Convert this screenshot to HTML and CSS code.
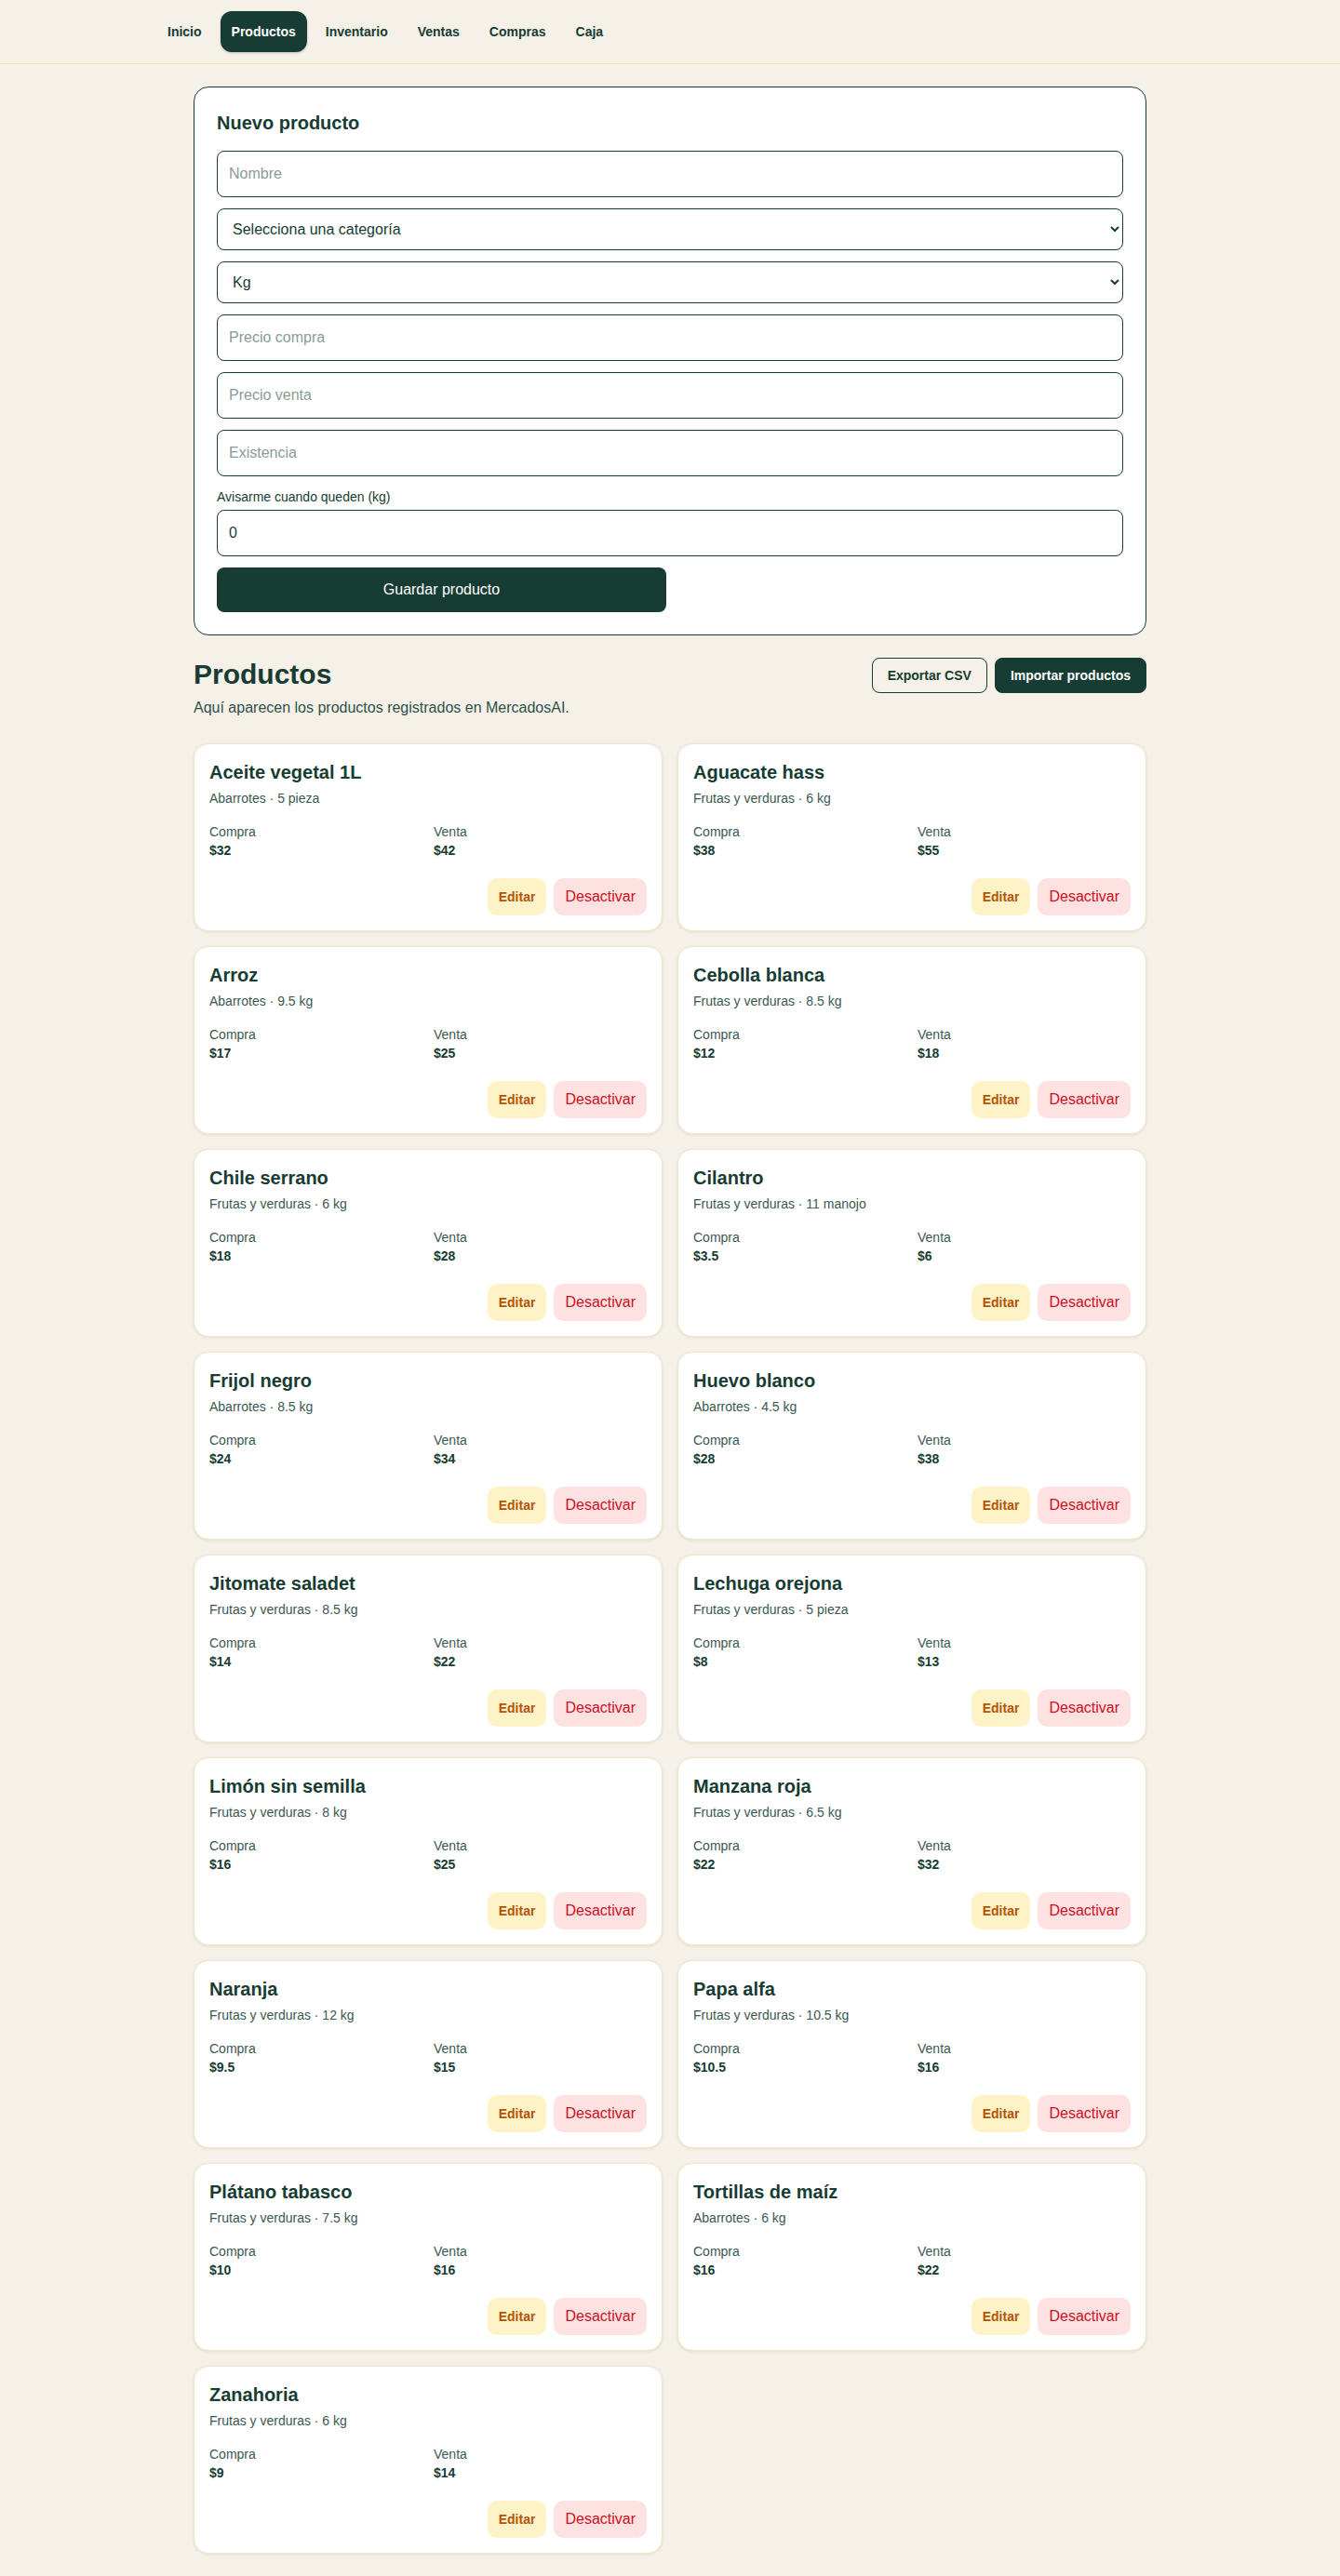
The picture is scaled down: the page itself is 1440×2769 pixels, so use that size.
FILE: index.html
```html
<!DOCTYPE html>
<html lang="es">

<head>
    <meta charset="UTF-8">
    <meta name="viewport" content="width=device-width, initial-scale=1.0">
    <title>MercadosAI - Productos</title>
    <link rel="stylesheet" href="styles.css">
</head>

<body>
    <header class="topbar">
        <nav class="nav">
            <a href="#">Inicio</a>
            <a href="#" class="active">Productos</a>
            <a href="#">Inventario</a>
            <a href="#">Ventas</a>
            <a href="#">Compras</a>
            <a href="#">Caja</a>
        </nav>
    </header>

    <main class="page">
        <section class="form-card">
            <h2>Nuevo producto</h2>
            <form class="product-form">
                <input type="text" placeholder="Nombre">
                <select>
                    <option>Selecciona una categoría</option>
                    <option>Abarrotes</option>
                    <option>Frutas y verduras</option>
                </select>
                <select>
                    <option>Kg</option>
                    <option>Pieza</option>
                    <option>Manojo</option>
                </select>
                <input type="text" placeholder="Precio compra">
                <input type="text" placeholder="Precio venta">
                <input type="text" placeholder="Existencia">
                <div class="field">
                    <label>Avisarme cuando queden (kg)</label>
                    <input type="text" value="0">
                </div>
                <button type="button" class="save-btn">Guardar producto</button>
            </form>
        </section>

        <section class="list-head">
            <div>
                <h1>Productos</h1>
                <p>Aquí aparecen los productos registrados en MercadosAI.</p>
            </div>
            <div class="head-actions">
                <button class="btn-outline">Exportar CSV</button>
                <button class="btn-dark">Importar productos</button>
            </div>
        </section>

        <section class="product-grid">
            <div class="product">
                <h3>Aceite vegetal 1L</h3>
                <div class="meta">Abarrotes · 5 pieza</div>
                <div class="prices">
                    <div><span class="label">Compra</span><span class="value">$32</span></div>
                    <div><span class="label">Venta</span><span class="value">$42</span></div>
                </div>
                <div class="actions"><button class="btn-edit">Editar</button><button class="btn-off">Desactivar</button></div>
            </div>
            <div class="product">
                <h3>Aguacate hass</h3>
                <div class="meta">Frutas y verduras · 6 kg</div>
                <div class="prices">
                    <div><span class="label">Compra</span><span class="value">$38</span></div>
                    <div><span class="label">Venta</span><span class="value">$55</span></div>
                </div>
                <div class="actions"><button class="btn-edit">Editar</button><button class="btn-off">Desactivar</button></div>
            </div>
            <div class="product">
                <h3>Arroz</h3>
                <div class="meta">Abarrotes · 9.5 kg</div>
                <div class="prices">
                    <div><span class="label">Compra</span><span class="value">$17</span></div>
                    <div><span class="label">Venta</span><span class="value">$25</span></div>
                </div>
                <div class="actions"><button class="btn-edit">Editar</button><button class="btn-off">Desactivar</button></div>
            </div>
            <div class="product">
                <h3>Cebolla blanca</h3>
                <div class="meta">Frutas y verduras · 8.5 kg</div>
                <div class="prices">
                    <div><span class="label">Compra</span><span class="value">$12</span></div>
                    <div><span class="label">Venta</span><span class="value">$18</span></div>
                </div>
                <div class="actions"><button class="btn-edit">Editar</button><button class="btn-off">Desactivar</button></div>
            </div>
            <div class="product">
                <h3>Chile serrano</h3>
                <div class="meta">Frutas y verduras · 6 kg</div>
                <div class="prices">
                    <div><span class="label">Compra</span><span class="value">$18</span></div>
                    <div><span class="label">Venta</span><span class="value">$28</span></div>
                </div>
                <div class="actions"><button class="btn-edit">Editar</button><button class="btn-off">Desactivar</button></div>
            </div>
            <div class="product">
                <h3>Cilantro</h3>
                <div class="meta">Frutas y verduras · 11 manojo</div>
                <div class="prices">
                    <div><span class="label">Compra</span><span class="value">$3.5</span></div>
                    <div><span class="label">Venta</span><span class="value">$6</span></div>
                </div>
                <div class="actions"><button class="btn-edit">Editar</button><button class="btn-off">Desactivar</button></div>
            </div>
            <div class="product">
                <h3>Frijol negro</h3>
                <div class="meta">Abarrotes · 8.5 kg</div>
                <div class="prices">
                    <div><span class="label">Compra</span><span class="value">$24</span></div>
                    <div><span class="label">Venta</span><span class="value">$34</span></div>
                </div>
                <div class="actions"><button class="btn-edit">Editar</button><button class="btn-off">Desactivar</button></div>
            </div>
            <div class="product">
                <h3>Huevo blanco</h3>
                <div class="meta">Abarrotes · 4.5 kg</div>
                <div class="prices">
                    <div><span class="label">Compra</span><span class="value">$28</span></div>
                    <div><span class="label">Venta</span><span class="value">$38</span></div>
                </div>
                <div class="actions"><button class="btn-edit">Editar</button><button class="btn-off">Desactivar</button></div>
            </div>
            <div class="product">
                <h3>Jitomate saladet</h3>
                <div class="meta">Frutas y verduras · 8.5 kg</div>
                <div class="prices">
                    <div><span class="label">Compra</span><span class="value">$14</span></div>
                    <div><span class="label">Venta</span><span class="value">$22</span></div>
                </div>
                <div class="actions"><button class="btn-edit">Editar</button><button class="btn-off">Desactivar</button></div>
            </div>
            <div class="product">
                <h3>Lechuga orejona</h3>
                <div class="meta">Frutas y verduras · 5 pieza</div>
                <div class="prices">
                    <div><span class="label">Compra</span><span class="value">$8</span></div>
                    <div><span class="label">Venta</span><span class="value">$13</span></div>
                </div>
                <div class="actions"><button class="btn-edit">Editar</button><button class="btn-off">Desactivar</button></div>
            </div>
            <div class="product">
                <h3>Limón sin semilla</h3>
                <div class="meta">Frutas y verduras · 8 kg</div>
                <div class="prices">
                    <div><span class="label">Compra</span><span class="value">$16</span></div>
                    <div><span class="label">Venta</span><span class="value">$25</span></div>
                </div>
                <div class="actions"><button class="btn-edit">Editar</button><button class="btn-off">Desactivar</button></div>
            </div>
            <div class="product">
                <h3>Manzana roja</h3>
                <div class="meta">Frutas y verduras · 6.5 kg</div>
                <div class="prices">
                    <div><span class="label">Compra</span><span class="value">$22</span></div>
                    <div><span class="label">Venta</span><span class="value">$32</span></div>
                </div>
                <div class="actions"><button class="btn-edit">Editar</button><button class="btn-off">Desactivar</button></div>
            </div>
            <div class="product">
                <h3>Naranja</h3>
                <div class="meta">Frutas y verduras · 12 kg</div>
                <div class="prices">
                    <div><span class="label">Compra</span><span class="value">$9.5</span></div>
                    <div><span class="label">Venta</span><span class="value">$15</span></div>
                </div>
                <div class="actions"><button class="btn-edit">Editar</button><button class="btn-off">Desactivar</button></div>
            </div>
            <div class="product">
                <h3>Papa alfa</h3>
                <div class="meta">Frutas y verduras · 10.5 kg</div>
                <div class="prices">
                    <div><span class="label">Compra</span><span class="value">$10.5</span></div>
                    <div><span class="label">Venta</span><span class="value">$16</span></div>
                </div>
                <div class="actions"><button class="btn-edit">Editar</button><button class="btn-off">Desactivar</button></div>
            </div>
            <div class="product">
                <h3>Plátano tabasco</h3>
                <div class="meta">Frutas y verduras · 7.5 kg</div>
                <div class="prices">
                    <div><span class="label">Compra</span><span class="value">$10</span></div>
                    <div><span class="label">Venta</span><span class="value">$16</span></div>
                </div>
                <div class="actions"><button class="btn-edit">Editar</button><button class="btn-off">Desactivar</button></div>
            </div>
            <div class="product">
                <h3>Tortillas de maíz</h3>
                <div class="meta">Abarrotes · 6 kg</div>
                <div class="prices">
                    <div><span class="label">Compra</span><span class="value">$16</span></div>
                    <div><span class="label">Venta</span><span class="value">$22</span></div>
                </div>
                <div class="actions"><button class="btn-edit">Editar</button><button class="btn-off">Desactivar</button></div>
            </div>
            <div class="product">
                <h3>Zanahoria</h3>
                <div class="meta">Frutas y verduras · 6 kg</div>
                <div class="prices">
                    <div><span class="label">Compra</span><span class="value">$9</span></div>
                    <div><span class="label">Venta</span><span class="value">$14</span></div>
                </div>
                <div class="actions"><button class="btn-edit">Editar</button><button class="btn-off">Desactivar</button></div>
            </div>
        </section>
    </main>
</body>

</html>
```

FILE: styles.css
```css
* {
    box-sizing: border-box;
}

body {
    margin: 0;
    background-color: #f5f0e8;
    color: #173c33;
    font-family: "Liberation Sans", Arial, sans-serif;
}

/* barra superior */
.topbar {
    border-bottom: 1px solid #f1dcb1;
}

.nav {
    max-width: 1152px;
    margin: 0 auto;
    padding: 12px 24px;
    display: flex;
    gap: 8px;
}

.nav a {
    padding: 12px;
    font-size: 14px;
    line-height: 20px;
    font-weight: bold;
    color: #173c33;
    text-decoration: none;
    border-radius: 12px;
}

.nav a.active {
    background-color: #173c33;
    color: #fff;
    box-shadow: 0 1px 3px rgba(0, 0, 0, 0.2);
}

.page {
    max-width: 1024px;
    margin: 0 auto;
    padding: 24px 0;
}

/* formulario */
.form-card {
    background-color: #fff;
    border: 1px solid #173c33;
    border-radius: 16px;
    padding: 24px;
}

.form-card h2 {
    margin: 0 0 16px;
    font-size: 20px;
    line-height: 28px;
    font-weight: bold;
}

.product-form {
    display: flex;
    flex-direction: column;
    gap: 12px;
}

.product-form input,
.product-form select {
    width: 100%;
    height: 50px;
    padding: 0 12px;
    border: 1px solid #173c33;
    border-radius: 8px;
    background-color: #fff;
    color: #173c33;
    font-family: inherit;
    font-size: 16px;
}

.product-form select {
    height: 45px;
}

.product-form input::placeholder {
    color: #8a9b98;
}

.field label {
    display: block;
    font-size: 14px;
    line-height: 20px;
    margin-bottom: 4px;
}

.save-btn {
    width: calc(50% - 4px);
    height: 48px;
    border: 0;
    border-radius: 8px;
    background-color: #173c33;
    color: #fff;
    font-family: inherit;
    font-size: 16px;
}

/* encabezado lista */
.list-head {
    margin-top: 24px;
    display: flex;
    justify-content: space-between;
    align-items: flex-start;
}

.list-head h1 {
    margin: 0;
    font-size: 30px;
    line-height: 36px;
    font-weight: bold;
}

.list-head p {
    margin: 6px 0 0;
    font-size: 16px;
    line-height: 24px;
    color: #2f5049;
}

.head-actions {
    display: flex;
    gap: 8px;
}

.btn-outline,
.btn-dark {
    padding: 8px 16px;
    border: 1px solid #173c33;
    border-radius: 8px;
    font-family: inherit;
    font-size: 14px;
    line-height: 20px;
    font-weight: bold;
}

.btn-outline {
    background-color: transparent;
    color: #173c33;
}

.btn-dark {
    background-color: #173c33;
    color: #fff;
}

/* tarjetas */
.product-grid {
    margin-top: 26px;
    display: grid;
    grid-template-columns: 1fr 1fr;
    gap: 16px;
}

.product {
    background-color: #fff;
    border: 1px solid #f1e5cb;
    border-radius: 16px;
    padding: 16px;
    box-shadow: 0 1px 3px rgba(120, 90, 40, 0.12);
}

.product h3 {
    margin: 0;
    font-size: 20px;
    line-height: 28px;
    font-weight: bold;
}

.meta {
    margin-top: 4px;
    font-size: 14px;
    line-height: 20px;
    color: #3a5852;
}

.prices {
    margin-top: 16px;
    display: grid;
    grid-template-columns: 1fr 1fr;
    gap: 12px;
    font-size: 14px;
    line-height: 20px;
}

.label {
    display: block;
    color: #3a5852;
}

.value {
    display: block;
    font-weight: bold;
}

.actions {
    margin-top: 20px;
    display: flex;
    justify-content: flex-end;
    gap: 8px;
}

.btn-edit,
.btn-off {
    height: 40px;
    padding: 0 12px;
    border: 0;
    border-radius: 10px;
    font-family: inherit;
}

.btn-edit {
    background-color: #fef3c7;
    color: #b45309;
    font-size: 14px;
    font-weight: bold;
}

.btn-off {
    background-color: #fee2e2;
    color: #cc0f24;
    font-size: 16px;
}
```
